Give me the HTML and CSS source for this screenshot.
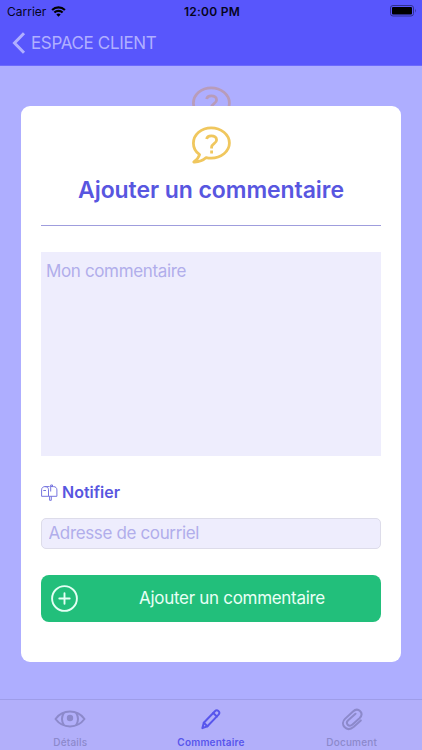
FILE: index.html
```
<!DOCTYPE html>
<html lang="fr">

<head>
    <meta charset="UTF-8">
    <meta name="viewport" content="width=device-width, initial-scale=1.0">
    <title>Ajouter un commentaire</title>
    <link rel="stylesheet" href="styles.css">
</head>

<body>

    <!-- shared icons -->
    <svg width="0" height="0" class="defs">
        <symbol id="bubble" viewBox="0 0 39 38">
            <path d="M7.600 28.600C3.500 25.800 1.400 21.800 1.400 17.200C1.400 8.600 9.400 1.800 19.200 1.800S37.400 8.600 37.400 17S29 32.200 19.200 32.200C17.400 32.200 15.800 32 14.200 31.600C10.800 34.800 6.600 36.200 1.800 36C4.800 34 6.600 31.600 7.600 28.600Z" />
            <path d="M14.600 13C15 10.800 16.900 9.800 19.300 9.800C22.300 9.800 24.600 11.300 24.600 13.900C24.600 17.400 19.600 17.600 19.600 21V22.600M19.600 24.600V27.500" />
        </symbol>
    </svg>

    <div class="screen">
        <header class="header">
            <div class="status-bar">
                <div class="carrier">
                    <span>Carrier</span>
                    <svg class="wifi" viewBox="0 0 15 11">
                        <path d="M7.500 10.800L5.300 8.500A3.200 3.200 0 0 1 9.700 8.500Z" fill="#000" />
                        <path d="M3.400 6.500A5.900 5.900 0 0 1 11.600 6.500M1.100 4A9.200 9.200 0 0 1 13.900 4" fill="none" stroke="#000" stroke-width="2.200" />
                    </svg>
                </div>
                <span class="time">12:00 PM</span>
                <svg class="battery" viewBox="0 0 27 12">
                    <rect x="0.500" y="0.500" width="23" height="10.500" rx="2.500" fill="none" stroke="#30308c" />
                    <rect x="2" y="2" width="20" height="7.500" rx="1" fill="#000" />
                    <path d="M25 3.800Q26.600 5.800 25 7.700Z" fill="#30308c" />
                </svg>
            </div>
            <div class="nav-bar">
                <svg class="back-icon" viewBox="0 0 14 22">
                    <path d="M12 1.200L2.500 11L12 20.800" />
                </svg>
                <span class="nav-title">ESPACE CLIENT</span>
            </div>
        </header>

        <main class="content">
            <svg class="bubble bubble-back"><use href="#bubble" /></svg>
        </main>

        <nav class="tab-bar">
            <div class="tab">
                <svg class="tab-icon" viewBox="0 0 32 24">
                    <path d="M1.500 12C5 7.300 10 4.600 16 4.600S27 7.300 30.500 12C27 16.700 22 19.400 16 19.400S5 16.700 1.500 12Z" />
                    <path d="M9.800 6C7.400 10 7.400 14 9.800 18M22.200 6C24.600 10 24.600 14 22.200 18" />
                    <circle class="pupil" cx="16" cy="11" r="3.200" />
                </svg>
                <span class="tab-label">Détails</span>
            </div>
            <div class="tab active">
                <svg class="tab-icon" viewBox="0 0 32 24">
                    <path d="M7.400 21.100L8.800 15.700L19.900 4.200C21 3.100 22.300 3 23.400 4C24.700 5.100 24.700 6.500 23.600 7.600L12.400 19.300Z" />
                    <path d="M8.800 15.700L12.400 19.300M18.200 6L21.900 9.500" />
                </svg>
                <span class="tab-label">Commentaire</span>
            </div>
            <div class="tab">
                <svg class="tab-icon" viewBox="0 0 32 24">
                    <path d="M24.800 13.400L17.800 19.800C14.300 22.700 10.700 22.400 8.500 20C6.300 17.600 6.500 14.300 9 11.900L16.700 4.700C19.300 2.300 22.200 2.200 24.200 4.300C26.200 6.400 25.800 9 23.500 11.200L16.500 17.500C14.800 19.100 12.900 19 11.700 17.700C10.500 16.400 10.600 14.800 12.200 13.300L19.500 6.700" />
                </svg>
                <span class="tab-label">Document</span>
            </div>
        </nav>

        <form class="modal">
            <svg class="bubble"><use href="#bubble" /></svg>
            <h1>Ajouter un commentaire</h1>
            <textarea class="comment-input" placeholder="Mon commentaire"></textarea>
            <label class="notify" for="email">
                <svg class="mailbox" viewBox="0 0 17 17">
                    <path d="M7.500 12.300H0.600V5.800C0.600 1.500 7.500 1.500 7.500 5.800ZM4 2.600H8.600M10.800 2.600H12.500C14.700 2.600 15.900 4 15.900 5.900V12.300H7.500M2.300 6.500H5M9.700 7.500V1H11.500V2.500H9.700M8.600 12.300V16.300H10.300V12.300" />
                </svg>
                <span>Notifier</span>
            </label>
            <input class="email-input" type="email" id="email" placeholder="Adresse de courriel">
            <button type="button" class="submit">
                <svg class="plus" viewBox="0 0 27 27">
                    <circle cx="13.500" cy="13.500" r="12.400" />
                    <path d="M13.500 8.300V18.700M8.300 13.500H18.700" />
                </svg>
                <span>Ajouter un commentaire</span>
            </button>
        </form>
    </div>

</body>

</html>
```
FILE: styles.css
```
* {
    box-sizing: border-box;
}

body {
    margin: 0;
    font-family: Inter, "Liberation Sans", sans-serif;
}

.defs {
    position: absolute;
}

.screen {
    position: relative;
    display: flex;
    flex-direction: column;
    width: 422px;
    height: 750px;
    overflow: hidden;
    background-color: #aeaeff;
}

.header {
    height: 66px;
    background-color: #5856fc;
    border-bottom: 1px solid #6c6afc;
}

.status-bar {
    display: grid;
    grid-template-columns: 1fr auto 1fr;
    align-items: center;
    height: 22px;
    padding: 0 5px 0 7px;
    font-size: 12px;
    color: #05051c;
}

.carrier {
    display: flex;
    align-items: center;
    gap: 5px;
}

.wifi {
    width: 15px;
    height: 11px;
}

.time {
    font-weight: 600;
    letter-spacing: 0.25px;
}

.battery {
    justify-self: end;
    width: 27px;
    height: 12px;
}

.nav-bar {
    display: flex;
    align-items: center;
    gap: 5px;
    height: 42px;
    padding-left: 12px;
    color: #b0afff;
}

.back-icon {
    width: 14px;
    height: 22px;
    fill: none;
    stroke: #b0afff;
    stroke-width: 3;
}

.nav-title {
    font-size: 17px;
    letter-spacing: -0.35px;
}

.content {
    flex: 1;
    padding-top: 20px;
    text-align: center;
}

.bubble {
    width: 39px;
    height: 38px;
    fill: none;
    stroke: #f0c75e;
    stroke-width: 2.8;
    stroke-linejoin: round;
}

.bubble-back {
    stroke: #b89cba;
}

.tab-bar {
    display: flex;
    height: 51px;
    border-top: 1px solid #9e9de9;
    background-color: #b2affa;
}

.tab {
    flex: 1;
    display: flex;
    flex-direction: column;
    align-items: center;
    padding-top: 7px;
    color: #8c89cb;
}

.tab.active {
    color: #5856ec;
}

.tab-icon {
    width: 32px;
    height: 24px;
    fill: none;
    stroke: currentColor;
    stroke-width: 2;
    stroke-linejoin: round;
    stroke-linecap: round;
}

.pupil {
    fill: currentColor;
    stroke: none;
}

.tab-label {
    margin-top: 5px;
    font-size: 10px;
    line-height: 13px;
    font-weight: 500;
    letter-spacing: 0.2px;
}

.active .tab-label {
    font-weight: 600;
}

.modal {
    position: absolute;
    top: 106px;
    left: 21px;
    display: flex;
    flex-direction: column;
    align-items: center;
    width: 380px;
    height: 556px;
    padding: 20px 20px 40px;
    border-radius: 9px;
    background-color: #fff;
}

h1 {
    width: 100%;
    height: 62px;
    margin: 0 0 26px;
    padding-top: 11px;
    border-bottom: 1px solid #9f9ddd;
    font-size: 23px;
    line-height: 30px;
    font-weight: 600;
    letter-spacing: -0.07px;
    text-align: center;
    white-space: nowrap;
    color: #5856e0;
}

.comment-input,
.email-input {
    width: 100%;
    margin: 0;
    font-family: inherit;
    font-size: 17px;
    letter-spacing: -0.36px;
    color: #5856e0;
    background-color: #eeedfd;
    outline: none;
}

.comment-input {
    height: 204px;
    padding: 8px 5px;
    border: none;
    resize: none;
    line-height: 22px;
}

::placeholder {
    color: #b1aeeb;
    opacity: 1;
}

.notify {
    display: flex;
    align-items: center;
    align-self: flex-start;
    gap: 4px;
    height: 20px;
    margin: 26px 0 16px;
    font-size: 16px;
    font-weight: 600;
    color: #5856e0;
}

.mailbox {
    width: 17px;
    height: 17px;
    fill: none;
    stroke: #7775df;
    stroke-width: 1;
}

.email-input {
    height: 31px;
    padding: 0 6.5px 2px;
    border: 1px solid #dddcea;
    border-radius: 5px;
}

.submit {
    display: flex;
    align-items: center;
    width: 100%;
    height: 47px;
    margin-top: 26px;
    padding: 0 10px;
    border: none;
    border-radius: 8px;
    background-color: #22bf7b;
    font-family: inherit;
    font-size: 17px;
    letter-spacing: -0.3px;
    color: #e9fff6;
}

.submit span {
    flex: 1;
    padding: 0 0 1px 15px;
    white-space: nowrap;
}

.plus {
    width: 27px;
    height: 27px;
    fill: none;
    stroke: #e4fff4;
    stroke-width: 1.9;
    stroke-linecap: round;
}
```
